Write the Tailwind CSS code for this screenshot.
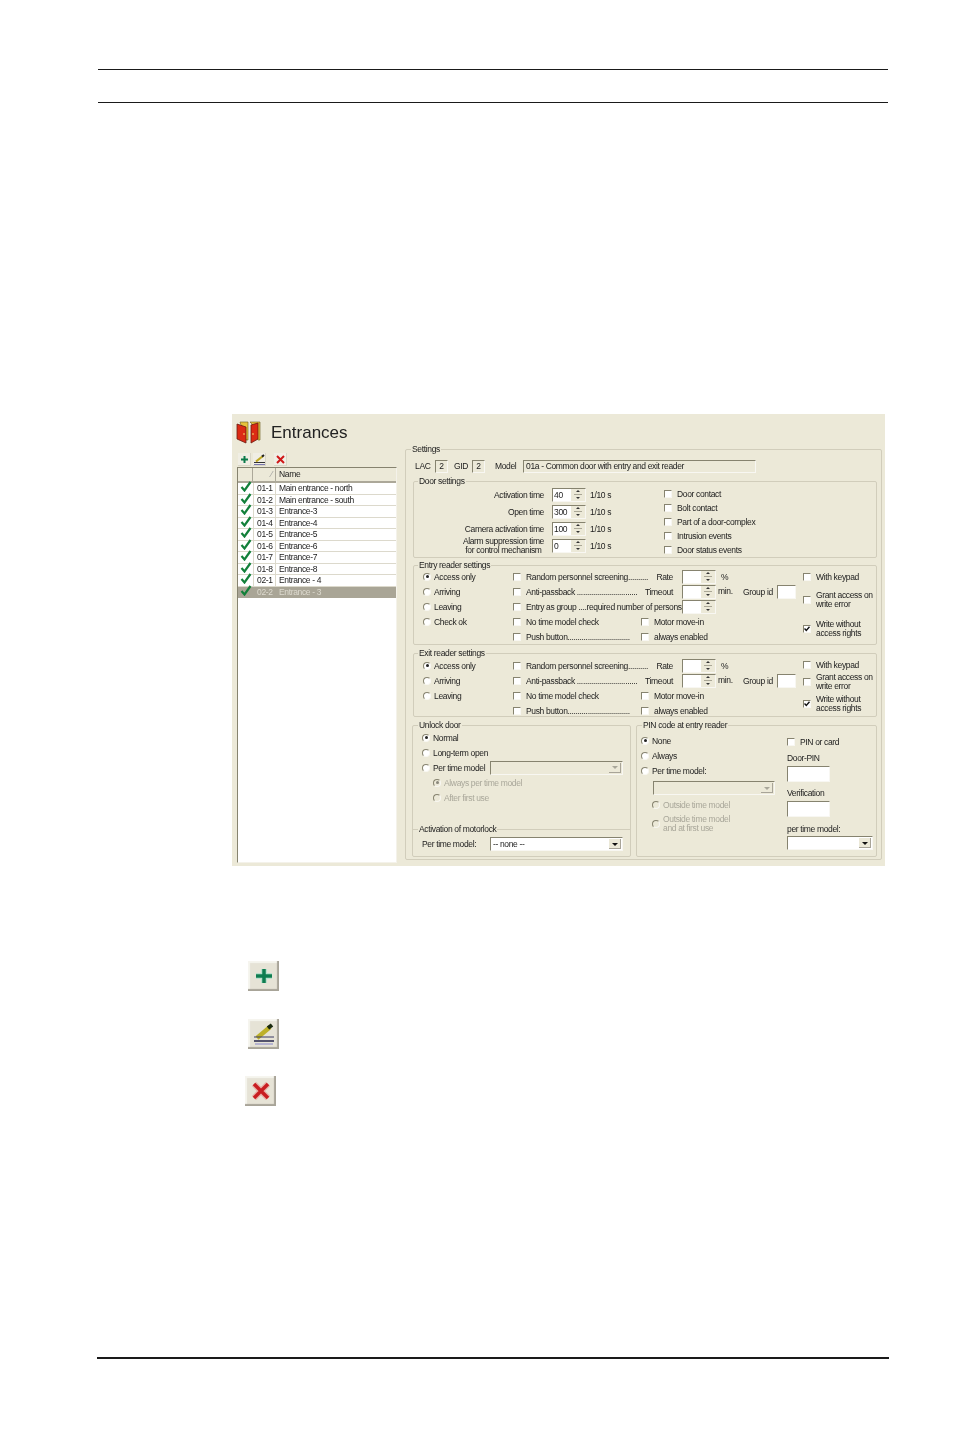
<!DOCTYPE html>
<html lang="en">
<head>
    <meta charset="UTF-8">
    <meta name="viewport" content="width=device-width, initial-scale=1.0">
    <title>Entrances</title>
    <script src="https://cdn.jsdelivr.net/npm/@tailwindcss/browser@4"></script>
</head>
<body class="bg-white font-['Liberation_Sans',sans-serif]">

<div class="w-[954px] h-[1430px] overflow-hidden">
    <!-- Page header rules -->
    <div class="ml-[98px] mt-[69px] w-[790px] h-[34px] border-y border-[#1a1a1a]"></div>

    <!-- Screenshot of the dialog -->
    <div class="ml-[232px] mt-[311px] w-[653px] h-[452px] bg-[#ece9d8] flex text-[8.5px] leading-[10px] tracking-[-0.35px] text-[#1c1c1c] blur-[0.4px]">

        <!-- Left column -->
        <div class="w-[173px] pl-[4px] pt-[6px]">
            <div class="flex items-center h-[24px]">
                <svg width="25" height="24" viewBox="0 0 25 24">
                    <path d="M4 2 H12 V20 H10 Z" fill="#e6c23c" stroke="#6a5a20" stroke-width="0.6"/>
                    <path d="M1 4 L10 7 V23 L1 19 Z" fill="#dc2a14" stroke="#6a1a10" stroke-width="0.8"/>
                    <path d="M14 2 H24 V20 H22 L16 4 Z" fill="#e6c23c" stroke="#6a5a20" stroke-width="0.6"/>
                    <path d="M15 5 L22 3 V19 L15 23 Z" fill="#dc2a14" stroke="#6a1a10" stroke-width="0.8"/>
                    <path d="M8 13 V15 M17 13 V15" stroke="#f4d86a" stroke-width="1"/>
                </svg>
                <span class="ml-[10px] mt-[2px] text-[17px] leading-[24px] tracking-normal text-[#222]">Entrances</span>
            </div>
            <div class="flex mt-[9px] h-[13px] ml-[2px]">
                <svg class="w-[13px] h-[13px]" viewBox="0 0 13 13"><rect width="13" height="13" fill="#d9d6c6"/><rect width="12" height="12" fill="#f0eee4"/><path d="M6.5 3 V10 M3 6.5 H10" stroke="#0b7a4a" stroke-width="2"/></svg>
                <svg class="w-[13px] h-[13px] ml-[2px]" viewBox="0 0 13 13"><rect width="13" height="13" fill="#d9d6c6"/><rect width="12" height="12" fill="#f0eee4"/><path d="M3 8.5 L10 3" stroke="#bfa820" stroke-width="2.2"/><path d="M9 3.6 L11 2" stroke="#222" stroke-width="2"/><path d="M1 9.5 H12" stroke="#333" stroke-width="1"/><path d="M1 11.5 H12" stroke="#7a78b0" stroke-width="1"/></svg>
                <svg class="w-[13px] h-[13px] ml-[8px]" viewBox="0 0 13 13"><rect width="13" height="13" fill="#d9d6c6"/><rect width="12" height="12" fill="#f0eee4"/><path d="M3 3 L10 10 M10 3 L3 10" stroke="#d01818" stroke-width="2"/></svg>
            </div>
            <div class="mt-[1px] ml-px w-[160px] h-[396px] bg-white border border-t-[#86836f] border-l-[#86836f] border-r-[#f4f2ea] border-b-[#f4f2ea]">
                <div class="flex h-[15px] bg-[#ece9d8] border-b-2 border-[#aca899] leading-[13px]">
                    <div class="w-[15px] border-r border-[#aca899]"></div>
                    <div class="w-[23px] border-r border-[#aca899] text-right pr-[3px] text-[#999]">⁄</div>
                    <div class="pl-[3px]">Name</div>
                </div>
                <div id="rows"></div>
            </div>
        </div>

        <!-- Settings -->
        <div class="relative mt-[35px] w-[477px] h-[411px] pl-[7px] pt-[9px] border border-[#d1cdbb] rounded-[2px]">
            <span class="absolute -top-[6px] left-[5px] bg-[#ece9d8] px-px">Settings</span>

            <div class="flex items-center h-[14px] ml-[2px]">
                <span class="w-[20px]">LAC</span>
                <span class="w-[13px] h-[13px] flex items-center justify-center border border-t-[#86836f] border-l-[#86836f] border-r-[#f8f7f2] border-b-[#f8f7f2]">2</span>
                <span class="ml-[6px] w-[18px]">GID</span>
                <span class="w-[13px] h-[13px] flex items-center justify-center border border-t-[#86836f] border-l-[#86836f] border-r-[#f8f7f2] border-b-[#f8f7f2]">2</span>
                <span class="ml-[10px] w-[28px]">Model</span>
                <span class="w-[233px] h-[13px] pl-[2px] flex items-center border border-t-[#86836f] border-l-[#86836f] border-r-[#f8f7f2] border-b-[#f8f7f2]">01a - Common door with entry and exit reader</span>
            </div>

            <!-- Door settings -->
            <div class="relative flex mt-[8px] w-[464px] h-[77px] border border-[#d1cdbb] rounded-[2px]">
                <span class="absolute -top-[6px] left-[4px] bg-[#ece9d8] px-px">Door settings</span>
                <div id="door-times" class="w-[250px] pt-[4px]"></div>
                <div id="door-checks" class="pt-[5px]"></div>
            </div>

            <!-- Entry reader settings -->
            <div class="relative flex mt-[7px] w-[464px] h-[80px] border border-[#d1cdbb] rounded-[2px]">
                <span class="absolute -top-[6px] left-[4px] bg-[#ece9d8] px-px">Entry reader settings</span>
                <div id="entry-rows" class="w-[389px] pl-[9px] pt-[3px]"></div>
                <div id="entry-right" class="pt-[4px]"></div>
            </div>

            <!-- Exit reader settings -->
            <div class="relative flex mt-[8px] w-[464px] h-[64px] border border-[#d1cdbb] rounded-[2px]">
                <span class="absolute -top-[6px] left-[4px] bg-[#ece9d8] px-px">Exit reader settings</span>
                <div id="exit-rows" class="w-[389px] pl-[9px] pt-[4px]"></div>
                <div id="exit-right" class="pt-[4px]"></div>
            </div>

            <div class="flex mt-[8px] -ml-[1px] h-[132px]">
                <!-- Unlock door -->
                <div class="relative w-[219px] pl-[9px] pt-[4px] border border-[#d1cdbb] rounded-[2px]">
                    <span class="absolute -top-[6px] left-[5px] bg-[#ece9d8] px-px">Unlock door</span>
                    <div id="unlock"></div>
                    <div class="relative mt-[24px] -ml-[9px] w-[217px] border-t border-[#d1cdbb]">
                        <span class="absolute -top-[6px] left-[5px] bg-[#ece9d8] px-px">Activation of motorlock</span>
                        <div id="motorlock" class="flex items-center pt-[7px] pl-[9px]"></div>
                    </div>
                </div>
                <!-- PIN code at entry reader -->
                <div class="relative flex ml-[5px] w-[241px] border border-[#d1cdbb] rounded-[2px]">
                    <span class="absolute -top-[6px] left-[5px] bg-[#ece9d8] px-px">PIN code at entry reader</span>
                    <div id="pin-left" class="w-[150px] pl-[4px] pt-[7px]"></div>
                    <div id="pin-right" class="pt-[9px]"></div>
                </div>
            </div>
        </div>
    </div>

    <!-- Toolbar buttons explained below the screenshot -->
    <div class="mt-[95px]">
        <div class="ml-[248px] w-[31px] h-[30px] bg-[#e6e3d6] shadow-[inset_-2px_-2px_1px_#a8a498,inset_2px_2px_1px_#f6f5ef] flex items-center justify-center blur-[0.5px]">
            <svg class="w-[20px] h-[18px]" viewBox="0 0 20 18"><path d="M10 2 V16 M2 9 H18" stroke="#b8e0cc" stroke-width="6"/><path d="M10 2 V16 M2 9 H18" stroke="#0f7d50" stroke-width="3.5"/></svg>
        </div>
        <div class="ml-[248px] mt-[28px] w-[31px] h-[30px] bg-[#e6e3d6] shadow-[inset_-2px_-2px_1px_#a8a498,inset_2px_2px_1px_#f6f5ef] flex items-center justify-center blur-[0.5px]">
            <svg class="w-[25px] h-[24px]" viewBox="0 0 25 24"><path d="M6 16 L19 5" stroke="#bdb02a" stroke-width="4.5"/><path d="M17 6 L21 3" stroke="#1a2a10" stroke-width="4"/><path d="M3 15 H23" stroke="#3a3a66" stroke-width="1"/><path d="M3 19 H23" stroke="#23234a" stroke-width="1.5"/><path d="M4 22 H22" stroke="#b6b4d0" stroke-width="2"/></svg>
        </div>
        <div class="ml-[245px] mt-[27px] w-[31px] h-[30px] bg-[#e6e3d6] shadow-[inset_-2px_-2px_1px_#a8a498,inset_2px_2px_1px_#f6f5ef] flex items-center justify-center blur-[0.5px]">
            <svg class="w-[20px] h-[18px]" viewBox="0 0 20 18"><path d="M3 2 L17 16 M17 2 L3 16" stroke="#e8b0a8" stroke-width="6"/><path d="M3 2 L17 16 M17 2 L3 16" stroke="#c81e22" stroke-width="3.5"/></svg>
        </div>
    </div>

    <!-- Page footer rule -->
    <div class="ml-[97px] mt-[251px] w-[792px] h-[2px] bg-[#1a1a1a]"></div>
</div>

<script>
    const inset = 'border border-t-[#86836f] border-l-[#86836f] border-r-[#f8f7f2] border-b-[#f8f7f2]';

    function checkbox(on) {
        return `<span class="shrink-0 w-[8px] h-[8px] bg-white flex items-center justify-center ${inset}">${on ? '<svg width="6" height="6" viewBox="0 0 6 6"><path d="M0.5 2.5 L2.3 4.5 L5.5 0.8" fill="none" stroke="#111" stroke-width="1.4"/></svg>' : ''}</span>`;
    }

    function check(label, cls = '', on = false) {
        return `<div class="flex items-center h-[14px] ${cls}">${checkbox(on)}<span class="ml-[5px] whitespace-nowrap">${label}</span></div>`;
    }

    function check2(label1, label2, cls, on = false) {
        return `<div class="flex items-center ${cls}">${checkbox(on)}<span class="ml-[5px] leading-[9px] whitespace-nowrap">${label1}<br>${label2}</span></div>`;
    }

    function radio(label, on = false, off = false, w = 'w-[90px]') {
        const dot = on ? `<span class="w-[3px] h-[3px] rounded-full ${off ? 'bg-[#8a887c]' : 'bg-[#222]'}"></span>` : '';
        const fill = off ? 'bg-[#ece9d8]' : 'bg-white';
        const text = off ? 'text-[#a9a79a]' : '';
        return `<div class="flex items-center h-[15px] ${w}"><span class="shrink-0 w-[8px] h-[8px] rounded-full flex items-center justify-center ${fill} ${inset}">${dot}</span><span class="ml-[3px] whitespace-nowrap ${text}">${label}</span></div>`;
    }

    function spin(value = '', cls = '') {
        return `<div class="shrink-0 flex w-[34px] h-[14px] bg-white ${inset} ${cls}"><span class="flex-1 pl-[1px] leading-[12px]">${value}</span><span class="w-[14px] bg-[#ece9d8] flex flex-col items-center justify-center gap-[2px]"><span class="w-0 h-0 border-x-[2px] border-x-transparent border-b-[2px] border-b-[#333]"></span><span class="w-[8px] h-px bg-[#aaa796]"></span><span class="w-0 h-0 border-x-[2px] border-x-transparent border-t-[2px] border-t-[#333]"></span></span></div>`;
    }

    function combo(w, value = '', off = false) {
        const bg = off ? 'bg-[#ece9d8]' : 'bg-white';
        const arrow = off ? 'border-t-[#a9a79a]' : 'border-t-[#111]';
        return `<div class="shrink-0 flex h-[14px] ${w} ${bg} ${inset}"><span class="flex-1 pl-[2px] leading-[12px]">${value}</span><span class="w-[12px] m-px bg-[#ece9d8] flex items-center justify-center shadow-[inset_-1px_-1px_0_#a8a498]"><span class="w-0 h-0 border-x-[3px] border-x-transparent border-t-[3px] ${arrow}"></span></span></div>`;
    }

    function field(w, h) {
        return `<div class="${w} ${h} bg-white ${inset}"></div>`;
    }

    // Door list
    const entrances = [
        ['01-1', 'Main entrance - north'], ['01-2', 'Main entrance - south'], ['01-3', 'Entrance-3'],
        ['01-4', 'Entrance-4'], ['01-5', 'Entrance-5'], ['01-6', 'Entrance-6'], ['01-7', 'Entrance-7'],
        ['01-8', 'Entrance-8'], ['02-1', 'Entrance - 4'], ['02-2', 'Entrance - 3']
    ];
    document.getElementById('rows').innerHTML = entrances.map((row, i) => {
        const selected = i === entrances.length - 1;
        return `<div class="flex h-[11.5px] leading-[11px] border-b ${selected ? 'bg-[#a9a596] text-[#dedbd0] border-[#a9a596]' : 'border-[#dcd9cc]'}">
            <div class="w-[15px] flex justify-center"><svg class="-mt-[2px]" width="12" height="11" viewBox="0 0 12 11"><path d="M1.5 6 L4.5 9.5 L10.5 1" fill="none" stroke="#12803a" stroke-width="2.2"/></svg></div>
            <div class="w-[23px] pl-[3px] border-x ${selected ? 'border-[#a9a596]' : 'border-[#dcd9cc]'}">${row[0]}</div>
            <div class="pl-[3px] whitespace-nowrap">${row[1]}</div>
        </div>`;
    }).join('');

    // Door settings
    const timeRow = (label, value) => `<div class="flex items-center h-[17px]"><div class="w-[130px] text-right">${label}</div>${spin(value, 'ml-[8px]')}<span class="ml-[4px]">1/10 s</span></div>`;
    document.getElementById('door-times').innerHTML =
        timeRow('Activation time', '40') + timeRow('Open time', '300') + timeRow('Camera activation time', '100') +
        `<div class="flex items-center h-[17px]"><div class="w-[130px] text-right whitespace-nowrap"><span class="inline-block text-center leading-[9px]">Alarm suppression time<br>for control mechanism</span></div>${spin('0', 'ml-[8px]')}<span class="ml-[4px]">1/10 s</span></div>`;
    document.getElementById('door-checks').innerHTML =
        ['Door contact', 'Bolt contact', 'Part of a door-complex', 'Intrusion events', 'Door status events'].map(t => check(t)).join('');

    // Entry and exit reader rows
    const row = inner => `<div class="flex items-center h-[15px]">${inner}</div>`;
    const rateRow = (first, label, tail, extra) => row(`${first}<div class="flex items-center w-[169px]">${checkbox(false)}<span class="ml-[5px] flex-1 flex justify-between whitespace-nowrap pr-[9px]"><span>${label}</span><span>${tail}</span></span></div>${spin()}${extra}`);
    const percent = '<span class="ml-[5px]">%</span>';
    const group = `<span class="ml-[2px] w-[25px] -mt-[2px]">min.</span><span class="w-[34px]">Group id</span>${field('w-[19px]', 'h-[14px]')}`;
    const split = (first, a, b) => row(`${first}<div class="flex items-center w-[128px]">${checkbox(false)}<span class="ml-[5px] whitespace-nowrap">${a}</span></div>${checkbox(false)}<span class="ml-[5px] whitespace-nowrap">${b}</span>`);
    const blank = '<div class="w-[90px]"></div>';

    document.getElementById('entry-rows').innerHTML =
        rateRow(radio('Access only', true), 'Random personnel screening..........', 'Rate', percent) +
        rateRow(radio('Arriving'), 'Anti-passback ..............................', 'Timeout', group) +
        row(`${radio('Leaving')}<div class="flex items-center w-[169px]">${checkbox(false)}<span class="ml-[5px] whitespace-nowrap">Entry as group ....required number of persons</span></div>${spin()}`) +
        split(radio('Check ok'), 'No time model check', 'Motor move-in') +
        split(blank, 'Push button...............................', 'always enabled');

    document.getElementById('exit-rows').innerHTML =
        rateRow(radio('Access only', true), 'Random personnel screening..........', 'Rate', percent) +
        rateRow(radio('Arriving'), 'Anti-passback ..............................', 'Timeout', group) +
        split(radio('Leaving'), 'No time model check', 'Motor move-in') +
        split(blank, 'Push button...............................', 'always enabled');

    document.getElementById('entry-right').innerHTML =
        check('With keypad') +
        check2('Grant access on', 'write error', 'mt-[7px]') +
        check2('Write without', 'access rights', 'mt-[11px]', true);

    document.getElementById('exit-right').innerHTML =
        check('With keypad') +
        check2('Grant access on', 'write error', 'mt-[1px]') +
        check2('Write without', 'access rights', 'mt-[4px]', true);

    // Unlock door
    document.getElementById('unlock').innerHTML =
        radio('Normal', true, false, 'w-auto') +
        radio('Long-term open', false, false, 'w-auto') +
        row(`${radio('Per time model', false, false, 'w-[68px]')}${combo('w-[133px]', '', true)}`) +
        `<div class="ml-[11px]">${radio('Always per time model', true, true, 'w-auto')}${radio('After first use', false, true, 'w-auto')}</div>`;
    document.getElementById('motorlock').innerHTML =
        `<span class="w-[68px] whitespace-nowrap">Per time model:</span>${combo('w-[133px]', '-- none --')}`;

    // PIN code
    document.getElementById('pin-left').innerHTML =
        radio('None', true, false, 'w-auto') +
        radio('Always', false, false, 'w-auto') +
        radio('Per time model:', false, false, 'w-auto') +
        `<div class="ml-[12px] mt-[3px]">${combo('w-[122px]', '', true)}</div>` +
        `<div class="ml-[11px] mt-[2px]">${radio('Outside time model', false, true, 'w-auto')}</div>` +
        `<div class="ml-[11px] mt-[3px] flex items-center text-[#a9a79a]"><span class="shrink-0 w-[8px] h-[8px] rounded-full bg-[#ece9d8] ${inset}"></span><span class="ml-[3px] leading-[9px] whitespace-nowrap">Outside time model<br>and at first use</span></div>`;
    document.getElementById('pin-right').innerHTML =
        check('PIN or card') +
        `<div class="mt-[3px] h-[12px] leading-[12px]">Door-PIN</div><div class="mt-[2px]">${field('w-[43px]', 'h-[16px]')}</div>` +
        `<div class="mt-[5px] h-[12px] leading-[12px]">Verification</div><div class="mt-[2px]">${field('w-[43px]', 'h-[16px]')}</div>` +
        `<div class="mt-[6px] h-[12px] leading-[12px]">per time model:</div><div class="mt-[1px]">${combo('w-[86px]')}</div>`;
</script>

</body>
</html>
